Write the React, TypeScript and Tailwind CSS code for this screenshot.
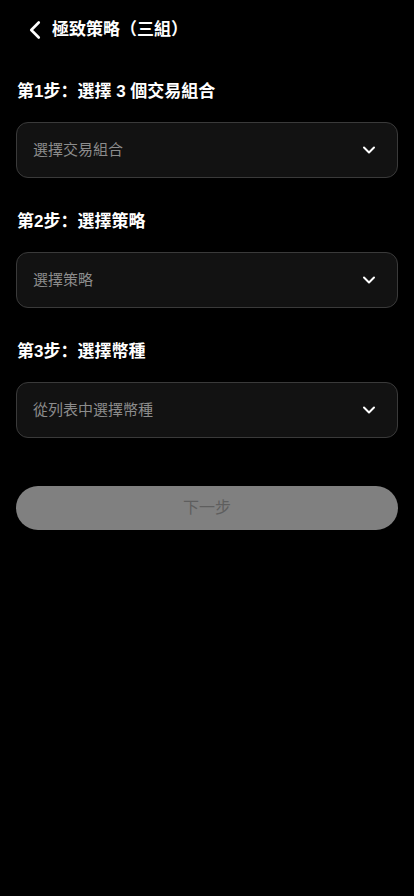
import { ChevronDown, ChevronLeft } from 'lucide-react';

const steps = [
  { label: '第1步：選擇 3 個交易組合', placeholder: '選擇交易組合' },
  { label: '第2步：選擇策略', placeholder: '選擇策略' },
  { label: '第3步：選擇幣種', placeholder: '從列表中選擇幣種' },
];

export default function App() {
  return (
    <div
      className="min-h-[896px] w-full bg-black text-white"
      style={{ fontFamily: '"Liberation Sans", "Noto Sans CJK SC", sans-serif' }}
    >
      <header className="flex h-[60px] items-center pl-[20px]">
        <ChevronLeft size={30} strokeWidth={2.1} className="text-white" />
        <h1 className="ml-[2px] text-[17px] font-bold leading-6">極致策略（三組）</h1>
      </header>

      <main className="flex flex-col gap-8 px-4 pt-5">
        {steps.map((s) => (
          <section key={s.label} className="flex flex-col gap-[18px]">
            <h2 className="pl-px text-[17px] font-bold leading-6">{s.label}</h2>
            <button
              type="button"
              className="flex h-[56px] w-full items-center justify-between rounded-xl border border-[#3a3a3a] bg-[#121212] pl-4 pr-[18px]"
            >
              <span className="text-[15px] text-[#8c8c8c]">{s.placeholder}</span>
              <ChevronDown size={20} strokeWidth={2.4} className="text-white" />
            </button>
          </section>
        ))}

        <button
          type="button"
          disabled
          className="mt-4 h-[44px] w-full rounded-full bg-[#808080] text-[16px] text-[#5e5e5e]"
        >
          下一步
        </button>
      </main>
    </div>
  );
}
